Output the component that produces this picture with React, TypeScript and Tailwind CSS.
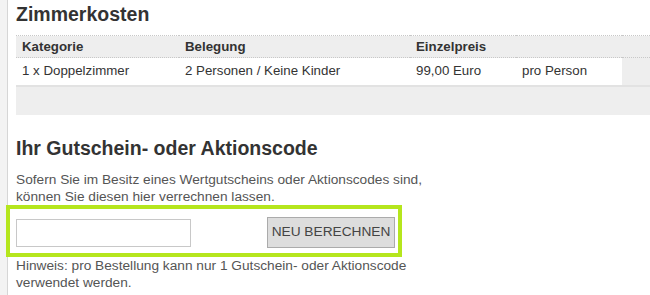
export default function App() {
  const rows = [
    { kategorie: "1 x Doppelzimmer", belegung: "2 Personen / Keine Kinder", preis: "99,00 Euro", einheit: "pro Person" },
  ];

  return (
    <div className="flex w-[650px] h-[295px] overflow-hidden bg-white font-['Liberation_Sans',Arial,sans-serif] text-[#333]">
      <div className="w-[8px] shrink-0 bg-[#f3f3f3] border-r border-[#d6d6d6]" />
      <div className="flex-1 min-w-0 pl-[8px] pt-[2px]">
        <h2 className="text-[19.5px] leading-[24px] font-bold text-[#333]">Zimmerkosten</h2>

        <table className="mt-[9px] w-full border-collapse text-[13.3px] text-[#333]">
          <thead>
            <tr className="h-[22px] bg-[#eeeeee] border-t border-b border-dotted border-[#c8c8c8]">
              <th className="w-[163px] px-[6px] text-left font-bold">Kategorie</th>
              <th className="w-[231px] px-[6px] text-left font-bold">Belegung</th>
              <th className="w-[106px] px-[6px] text-left font-bold">Einzelpreis</th>
              <th className="w-[106px] px-[6px] text-left font-bold"></th>
              <th className="px-[6px]"></th>
            </tr>
          </thead>
          <tbody>
            {rows.map((r) => (
              <tr key={r.kategorie} className="h-[28px] border-b-2 border-[#e2e2e2]">
                <td className="px-[6px] bg-white">{r.kategorie}</td>
                <td className="px-[6px] bg-white">{r.belegung}</td>
                <td className="px-[6px] bg-white">{r.preis}</td>
                <td className="px-[6px] bg-white">{r.einheit}</td>
                <td className="bg-[#eeeeee]"></td>
              </tr>
            ))}
            <tr className="h-[29px] bg-[#eeeeee]">
              <td colSpan={5}></td>
            </tr>
          </tbody>
        </table>

        <h2 className="mt-[21px] text-[19.5px] leading-[24px] font-bold text-[#333]">
          Ihr Gutschein- oder Aktionscode
        </h2>
        <p className="mt-[11px] text-[13.7px] leading-[17px] text-[#555]">
          Sofern Sie im Besitz eines Wertgutscheins oder Aktionscodes sind,
          <br />
          können Sie diesen hier verrechnen lassen.
        </p>

        <div className="-ml-[10px] w-[396px] h-[52px] border-4 border-[#b5e61d] flex items-center justify-between pl-[6px] pr-[3px] pt-[4px]">
          <input
            type="text"
            className="w-[175px] h-[28px] border border-[#c8c8c8] bg-white outline-none px-1 text-[13px]"
          />
          <button className="w-[128px] h-[31px] bg-[#dddddd] border border-[#ababab] text-[13.7px] text-[#444]">
            NEU BERECHNEN
          </button>
        </div>

        <p className="text-[13.7px] leading-[17px] text-[#555]">
          Hinweis: pro Bestellung kann nur 1 Gutschein- oder Aktionscode
          <br />
          verwendet werden.
        </p>
      </div>
    </div>
  );
}
